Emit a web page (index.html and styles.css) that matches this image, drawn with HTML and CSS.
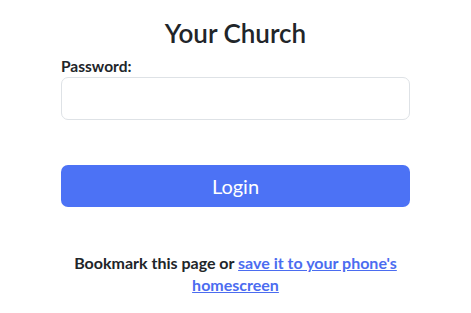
FILE: index.html
```
<!DOCTYPE html>
<html>
<head>
  <title>Your Church</title>
  <link rel="stylesheet" href="styles.css">
</head>
<body>
  <div class="login">
    <h1 class="heading">Your Church</h1>
    <form class="login-form">
      <label class="label" for="password">Password:</label>
      <input class="input" type="password" id="password">
      <button class="button" type="button">Login</button>
    </form>
    <p class="note">Bookmark this page or <a href="#">save it to your phone's homescreen</a></p>
  </div>
</body>
</html>
```
FILE: styles.css
```
body {
  margin: 0;
  background: #fff;
  color: #212529;
  font-family: "Lato", "Open Sans", sans-serif;
}

.login {
  width: 349px;
  margin: 0 auto;
  padding-top: 14px;
}

.heading {
  margin: 0;
  text-align: center;
  font-size: 26px;
  font-weight: 600;
  line-height: 38px;
}

.login-form {
  display: flex;
  flex-direction: column;
}

.label {
  margin-top: 4px;
  font-size: 15.5px;
  font-weight: bold;
  line-height: 21px;
}

.input {
  height: 43px;
  box-sizing: border-box;
  border: 1px solid #dee2e6;
  border-radius: 7px;
}

.button {
  height: 42px;
  margin-top: 45px;
  border: none;
  border-radius: 7px;
  background-color: #4c72f5;
  color: #fff;
  font-family: inherit;
  font-size: 20px;
}

.note {
  margin: 45px 0 0;
  text-align: center;
  font-size: 16px;
  font-weight: bold;
  line-height: 22px;
}

.note a {
  color: #4b6cf0;
}
```
